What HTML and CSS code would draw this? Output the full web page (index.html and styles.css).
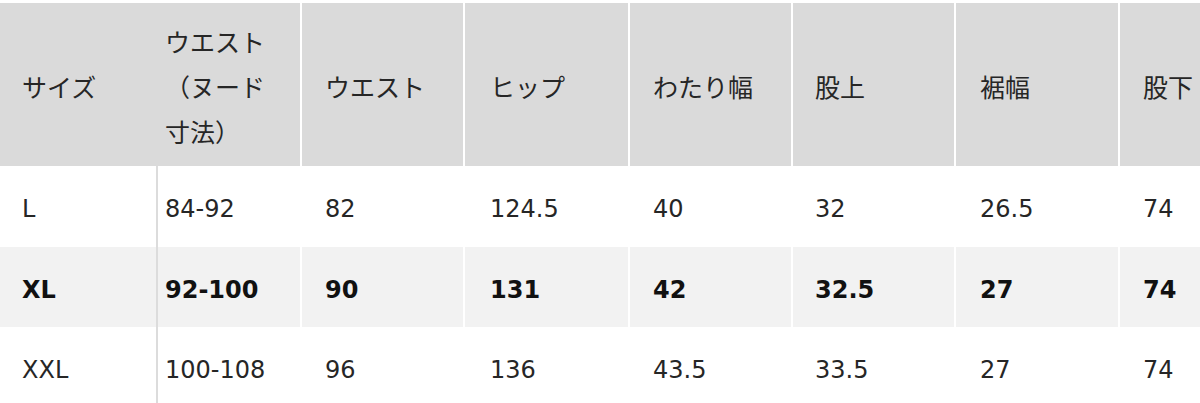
FILE: index.html
```html
<!DOCTYPE html>
<html lang="ja">
<head>
<meta charset="utf-8">
<title>サイズ表</title>
<link rel="stylesheet" href="styles.css">
</head>
<body>
<div class="wrap">
  <table class="size">
    <thead>
      <tr>
        <th class="c1">サイズ</th>
        <th class="c2">ウエスト（ヌード寸法）</th>
        <th class="c3">ウエスト</th>
        <th class="c4">ヒップ</th>
        <th class="c5">わたり幅</th>
        <th class="c6">股上</th>
        <th class="c7">裾幅</th>
        <th class="c8">股下</th>
      </tr>
    </thead>
    <tbody>
      <tr>
        <td class="c1">L</td><td class="c2">84-92</td><td class="c3">82</td><td class="c4">124.5</td><td class="c5">40</td><td class="c6">32</td><td class="c7">26.5</td><td class="c8">74</td>
      </tr>
      <tr class="hl">
        <td class="c1">XL</td><td class="c2">92-100</td><td class="c3">90</td><td class="c4">131</td><td class="c5">42</td><td class="c6">32.5</td><td class="c7">27</td><td class="c8">74</td>
      </tr>
      <tr>
        <td class="c1">XXL</td><td class="c2">100-108</td><td class="c3">96</td><td class="c4">136</td><td class="c5">43.5</td><td class="c6">33.5</td><td class="c7">27</td><td class="c8">74</td>
      </tr>
    </tbody>
  </table>
</div>
</body>
</html>
```

FILE: styles.css
```css
html, body {
  margin: 0;
  padding: 0;
  background: #ffffff;
}

.wrap {
  width: 1200px;
  height: 403px;
  padding-top: 3px;
  box-sizing: border-box;
  overflow: hidden;
}

.size {
  border-collapse: separate;
  border-spacing: 0;
  table-layout: fixed;
  width: 1282px;
  color: #222222;
}

.size th,
.size td {
  box-sizing: border-box;
  text-align: left;
  vertical-align: middle;
  padding: 0 0 0 23px;
  border-left: 2px solid #ffffff;
}

.size th {
  background: #dadada;
  height: 163px;
  padding-top: 16px;
  padding-bottom: 12px;
  padding-right: 20px;
  font-family: "Noto Sans CJK JP", sans-serif;
  font-weight: normal;
  font-size: 25px;
  line-height: 45px;
  color: #262626;
}

.size td {
  height: 80px;
  padding-top: 5px;
  font-family: "DejaVu Sans", "Noto Sans CJK JP", sans-serif;
  font-size: 24px;
  line-height: 30px;
  color: #262626;
}

.size tbody tr:first-child td {
  height: 81px;
}

.size .hl td {
  background: #f2f2f2;
  font-weight: bold;
  color: #111111;
}

.size .c1 {
  width: 158px;
  padding-left: 22px;
  border-left: none;
}

.size td.c1 {
  border-right: 2px solid #dcdcdc;
}

.size th.c1 {
  border-right: 2px solid #dadada;
}

.size .c2 {
  width: 142px;
  padding-left: 7px;
  border-left: none;
}

.size .c3 { width: 163px; }
.size .c4 { width: 165px; padding-left: 25px; }
.size .c5 { width: 163px; }
.size .c6 { width: 163px; padding-left: 22px; }
.size .c7 { width: 164px; padding-left: 24px; }
.size .c8 { width: 164px; }
```
